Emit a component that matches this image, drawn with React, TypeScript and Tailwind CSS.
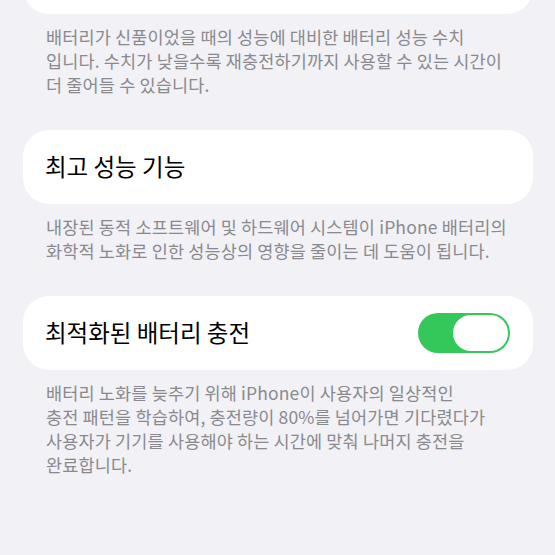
import React from "react";

const font = { fontFamily: '"Noto Sans CJK KR", "Noto Sans", sans-serif' };

function Footer({ lines }: { lines: string[] }) {
  return (
    <div className="pt-[11px] pl-[23px] text-[17.5px] tracking-[0.15px] leading-[24px] text-[#8a8a8e]">
      {lines.map((l, i) => (
        <div key={i} className="whitespace-nowrap">
          {l}
        </div>
      ))}
    </div>
  );
}

export default function App() {
  return (
    <div
      className="w-[555px] h-[555px] overflow-hidden bg-[#f1f1f6] pl-[23px] pr-[22px]"
      style={font}
    >
      <div className="h-[14px] overflow-hidden flex flex-col justify-end">
        <div className="h-[74px] shrink-0 w-full rounded-[26px] bg-white" />
      </div>
      <Footer
        lines={[
          "배터리가 신품이었을 때의 성능에 대비한 배터리 성능 수치",
          "입니다. 수치가 낮을수록 재충전하기까지 사용할 수 있는 시간이",
          "더 줄어들 수 있습니다.",
        ]}
      />
      <div className="mt-[33px] h-[74px] rounded-[26px] bg-white flex items-center pl-[22px]">
        <span className="text-[23.5px] text-black">최고 성능 기능</span>
      </div>
      <Footer
        lines={[
          "내장된 동적 소프트웨어 및 하드웨어 시스템이 iPhone 배터리의",
          "화학적 노화로 인한 성능상의 영향을 줄이는 데 도움이 됩니다.",
        ]}
      />
      <div className="mt-[33px] h-[74px] rounded-[26px] bg-white flex items-center justify-between pl-[22px] pr-[23px]">
        <span className="text-[23.5px] text-black">최적화된 배터리 충전</span>
        <div className="w-[92px] h-[40px] rounded-full bg-[#34c759] flex items-center justify-end pr-[2px]">
          <div className="w-[55px] h-[36px] rounded-full bg-white" />
        </div>
      </div>
      <Footer
        lines={[
          "배터리 노화를 늦추기 위해 iPhone이 사용자의 일상적인",
          "충전 패턴을 학습하여, 충전량이 80%를 넘어가면 기다렸다가",
          "사용자가 기기를 사용해야 하는 시간에 맞춰 나머지 충전을",
          "완료합니다.",
        ]}
      />
    </div>
  );
}
